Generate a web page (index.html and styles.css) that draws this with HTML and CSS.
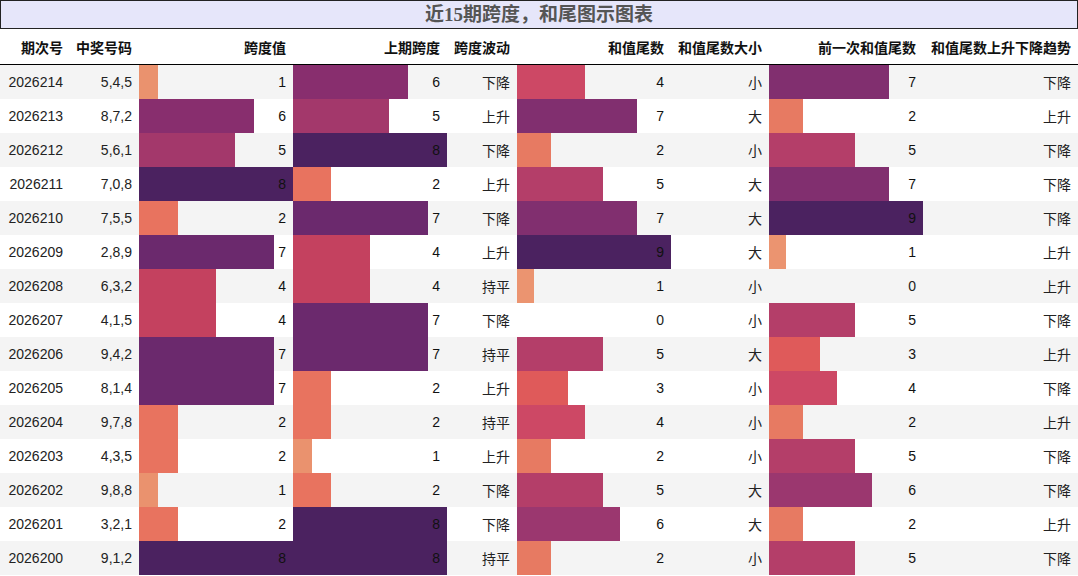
FILE: index.html
```html
<!DOCTYPE html>
<html lang="zh">
<head>
<meta charset="utf-8">
<title>近15期跨度，和尾图示图表</title>
<link rel="stylesheet" href="styles.css">
</head>
<body>
<div class="title">近15期跨度，和尾图示图表</div>
<table class="chart">
  <colgroup>
    <col class="c-issue"><col class="c-nums"><col class="c-bar"><col class="c-bar"><col class="c-trend"><col class="c-bar"><col class="c-size"><col class="c-bar"><col class="c-last">
  </colgroup>
  <thead>
    <tr><th>期次号</th><th>中奖号码</th><th>跨度值</th><th>上期跨度</th><th>跨度波动</th><th>和值尾数</th><th>和值尾数大小</th><th>前一次和值尾数</th><th>和值尾数上升下降趋势</th></tr>
  </thead>
  <tbody>
    <tr><td>2026214</td><td>5,4,5</td><td class="bar" style="--w:12.5%;--c:#ea926e">1</td><td class="bar" style="--w:75%;--c:#882e6e">6</td><td>下降</td><td class="bar" style="--w:44.44%;--c:#cd4865">4</td><td>小</td><td class="bar" style="--w:77.78%;--c:#812f6f">7</td><td>下降</td></tr>
    <tr><td>2026213</td><td>8,7,2</td><td class="bar" style="--w:75%;--c:#882e6e">6</td><td class="bar" style="--w:62.5%;--c:#a3386b">5</td><td>上升</td><td class="bar" style="--w:77.78%;--c:#812f6f">7</td><td>大</td><td class="bar" style="--w:22.22%;--c:#e77a62">2</td><td>上升</td></tr>
    <tr><td>2026212</td><td>5,6,1</td><td class="bar" style="--w:62.5%;--c:#a3386b">5</td><td class="bar" style="--w:100%;--c:#4b2260">8</td><td>下降</td><td class="bar" style="--w:22.22%;--c:#e77a62">2</td><td>小</td><td class="bar" style="--w:55.56%;--c:#b43e69">5</td><td>下降</td></tr>
    <tr><td>2026211</td><td>7,0,8</td><td class="bar" style="--w:100%;--c:#4b2260">8</td><td class="bar" style="--w:25%;--c:#e8735f">2</td><td>上升</td><td class="bar" style="--w:55.56%;--c:#b43e69">5</td><td>大</td><td class="bar" style="--w:77.78%;--c:#812f6f">7</td><td>下降</td></tr>
    <tr><td>2026210</td><td>7,5,5</td><td class="bar" style="--w:25%;--c:#e8735f">2</td><td class="bar" style="--w:87.5%;--c:#6b296d">7</td><td>下降</td><td class="bar" style="--w:77.78%;--c:#812f6f">7</td><td>大</td><td class="bar" style="--w:100%;--c:#4b2260">9</td><td>下降</td></tr>
    <tr><td>2026209</td><td>2,8,9</td><td class="bar" style="--w:87.5%;--c:#6b296d">7</td><td class="bar" style="--w:50%;--c:#c4415f">4</td><td>上升</td><td class="bar" style="--w:100%;--c:#4b2260">9</td><td>大</td><td class="bar" style="--w:11.11%;--c:#eb9470">1</td><td>上升</td></tr>
    <tr><td>2026208</td><td>6,3,2</td><td class="bar" style="--w:50%;--c:#c4415f">4</td><td class="bar" style="--w:50%;--c:#c4415f">4</td><td>持平</td><td class="bar" style="--w:11.11%;--c:#eb9470">1</td><td>小</td><td>0</td><td>上升</td></tr>
    <tr><td>2026207</td><td>4,1,5</td><td class="bar" style="--w:50%;--c:#c4415f">4</td><td class="bar" style="--w:87.5%;--c:#6b296d">7</td><td>下降</td><td>0</td><td>小</td><td class="bar" style="--w:55.56%;--c:#b43e69">5</td><td>下降</td></tr>
    <tr><td>2026206</td><td>9,4,2</td><td class="bar" style="--w:87.5%;--c:#6b296d">7</td><td class="bar" style="--w:87.5%;--c:#6b296d">7</td><td>持平</td><td class="bar" style="--w:55.56%;--c:#b43e69">5</td><td>大</td><td class="bar" style="--w:33.33%;--c:#df5a5a">3</td><td>上升</td></tr>
    <tr><td>2026205</td><td>8,1,4</td><td class="bar" style="--w:87.5%;--c:#6b296d">7</td><td class="bar" style="--w:25%;--c:#e8735f">2</td><td>上升</td><td class="bar" style="--w:33.33%;--c:#df5a5a">3</td><td>小</td><td class="bar" style="--w:44.44%;--c:#cd4865">4</td><td>下降</td></tr>
    <tr><td>2026204</td><td>9,7,8</td><td class="bar" style="--w:25%;--c:#e8735f">2</td><td class="bar" style="--w:25%;--c:#e8735f">2</td><td>持平</td><td class="bar" style="--w:44.44%;--c:#cd4865">4</td><td>小</td><td class="bar" style="--w:22.22%;--c:#e77a62">2</td><td>上升</td></tr>
    <tr><td>2026203</td><td>4,3,5</td><td class="bar" style="--w:25%;--c:#e8735f">2</td><td class="bar" style="--w:12.5%;--c:#ea926e">1</td><td>上升</td><td class="bar" style="--w:22.22%;--c:#e77a62">2</td><td>小</td><td class="bar" style="--w:55.56%;--c:#b43e69">5</td><td>下降</td></tr>
    <tr><td>2026202</td><td>9,8,8</td><td class="bar" style="--w:12.5%;--c:#ea926e">1</td><td class="bar" style="--w:25%;--c:#e8735f">2</td><td>下降</td><td class="bar" style="--w:55.56%;--c:#b43e69">5</td><td>大</td><td class="bar" style="--w:66.67%;--c:#9b376f">6</td><td>下降</td></tr>
    <tr><td>2026201</td><td>3,2,1</td><td class="bar" style="--w:25%;--c:#e8735f">2</td><td class="bar" style="--w:100%;--c:#4b2260">8</td><td>下降</td><td class="bar" style="--w:66.67%;--c:#9b376f">6</td><td>大</td><td class="bar" style="--w:22.22%;--c:#e77a62">2</td><td>上升</td></tr>
    <tr><td>2026200</td><td>9,1,2</td><td class="bar" style="--w:100%;--c:#4b2260">8</td><td class="bar" style="--w:100%;--c:#4b2260">8</td><td>持平</td><td class="bar" style="--w:22.22%;--c:#e77a62">2</td><td>小</td><td class="bar" style="--w:55.56%;--c:#b43e69">5</td><td>下降</td></tr>
  </tbody>
</table>
</body>
</html>
```
FILE: styles.css
```css
html, body {
  margin: 0;
  padding: 0;
  background: #fff;
}

body {
  width: 1078px;
  font-family: "Liberation Sans", "Noto Sans CJK SC", sans-serif;
  color: #111;
}

.title {
  box-sizing: border-box;
  height: 29px;
  border: 1px solid #222;
  background: #e6e6fa;
  text-align: center;
  font-family: "Liberation Serif", "Noto Sans CJK SC", serif;
  font-weight: bold;
  font-size: 19px;
  line-height: 28px;
  color: #555;
}

.chart {
  width: 1078px;
  border-collapse: collapse;
  table-layout: fixed;
  font-size: 14px;
}

.c-issue { width: 70px; }
.c-nums { width: 69px; }
.c-bar { width: 154px; }
.c-trend { width: 70px; }
.c-size { width: 98px; }
.c-last { width: 155px; }

.chart th,
.chart td {
  padding: 0 7px 0 0;
  text-align: right;
  white-space: nowrap;
  overflow: hidden;
}

.chart th {
  height: 35px;
  font-weight: bold;
  color: #111;
  border-bottom: 1px solid #000;
}

.chart td {
  height: 34px;
  color: #222;
}

.chart tbody tr:nth-child(odd) {
  background: #f4f4f4;
}

.chart tbody tr:nth-child(even) {
  background: #fff;
}

.chart td.bar {
  background-image: linear-gradient(90deg, var(--c) var(--w), transparent var(--w));
  color: #111;
}
```
